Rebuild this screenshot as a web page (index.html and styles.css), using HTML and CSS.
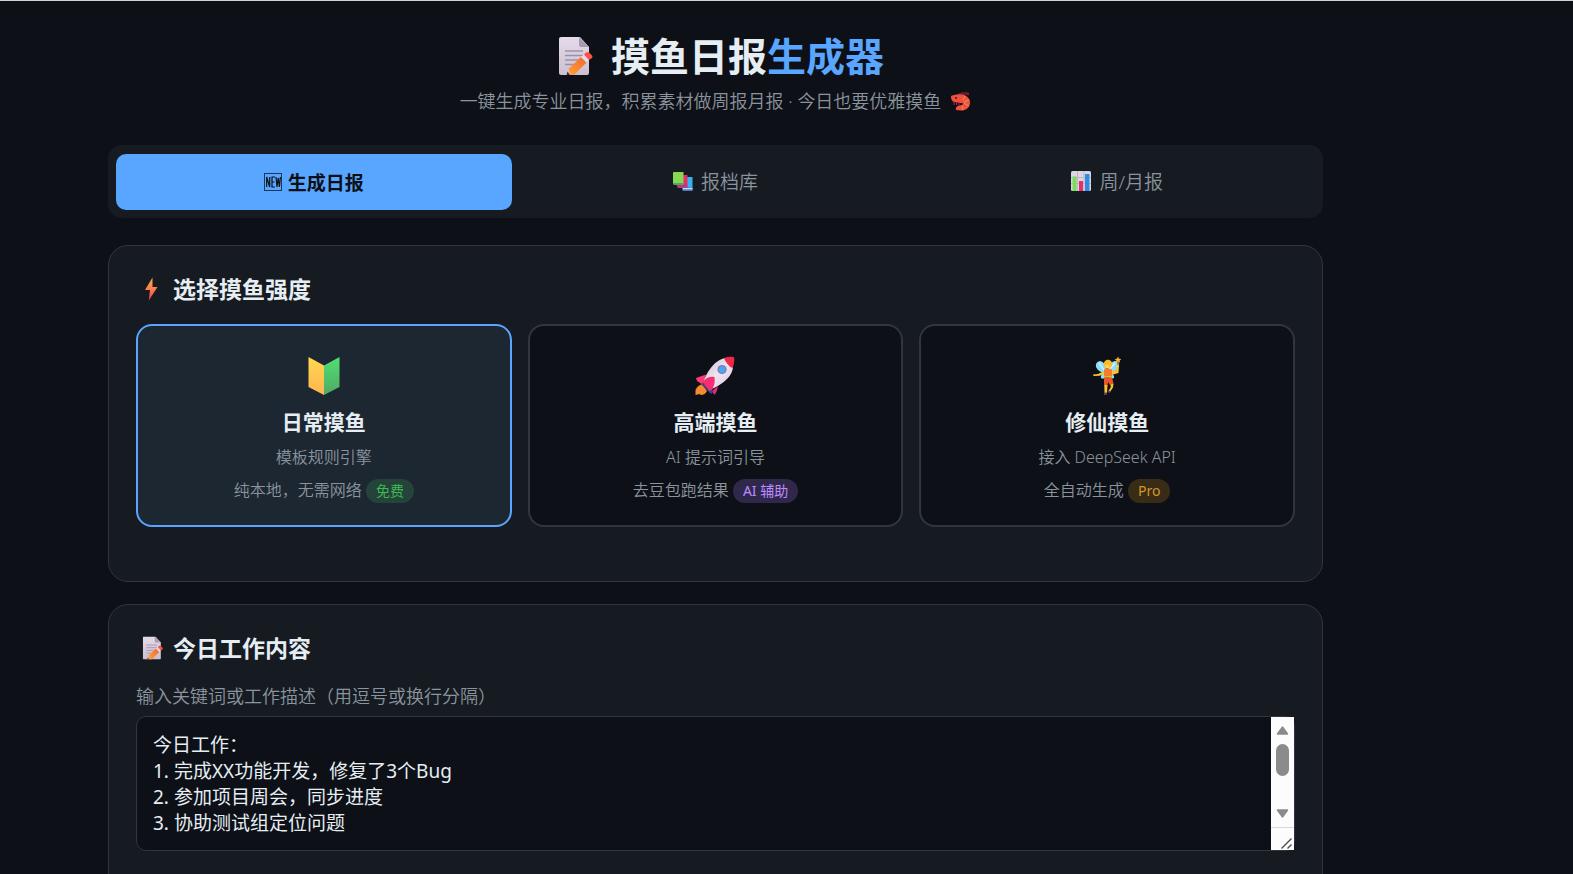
FILE: index.html
```
<!DOCTYPE html>
<html lang="zh-CN">

<head>
    <meta charset="UTF-8">
    <meta name="viewport" content="width=device-width, initial-scale=1.0">
    <title>摸鱼日报生成器</title>
    <link rel="stylesheet" href="styles.css">
</head>

<body>
    <!-- shared icons -->
    <svg class="sprite" aria-hidden="true">
        <defs>
            <linearGradient id="paper" x1="0" y1="0" x2="0" y2="1">
                <stop offset="0" stop-color="#e4dbea" />
                <stop offset="1" stop-color="#cdbfd0" />
            </linearGradient>
            <linearGradient id="pencil" x1="0" y1="1" x2="1" y2="0">
                <stop offset="0" stop-color="#ffa03a" />
                <stop offset="1" stop-color="#f4672f" />
            </linearGradient>
        </defs>
        <symbol id="memo" viewBox="0 0 34 38">
            <path d="M2 0h19l9 10v26a2 2 0 0 1-2 2H2a2 2 0 0 1-2-2V2a2 2 0 0 1 2-2z" fill="url(#paper)" />
            <path d="M20 0l10 10h-8a2 2 0 0 1-2-2z" fill="#a99cb0" />
            <path d="M6 14h18M6 18.500h18M6 23h14M6 27.500h9" stroke="#9c92a6" stroke-width="1.400" />
            <path d="M8 38l2-7 5 5-5 2z" fill="#f0bd8c" />
            <path d="M7.500 38l1-3.500 2.500 3.500z" fill="#4c2450" />
            <path d="M9.500 32L22 20l5.500 5.500L15 38h-3z" fill="url(#pencil)" />
            <path d="M22 20l3-2.500 5 5.500-2.500 2.500z" fill="#e6d9ec" />
            <path d="M25 17.500l2-2q1.500-1.200 3 0l3 3q1 1.500 0 2.500l-3 2z" fill="#fb5244" />
        </symbol>
    </svg>

    <div class="container">
        <header class="header">
            <h1>
                <svg class="icon-memo" viewBox="0 0 34 38" aria-hidden="true"><use href="#memo" /></svg>
                <span>摸鱼日报<em>生成器</em></span>
            </h1>
            <p>
                <span>一键生成专业日报，积累素材做周报月报 · 今日也要优雅摸鱼</span>
                <svg class="icon-shrimp" viewBox="0 0 20 19" aria-hidden="true">
                    <path d="M7 2.500C10 .8 14 .6 18 1.200M9 3.500c3-1.500 6-1.800 9-.8" fill="none" stroke="#9c2735" stroke-width="1" />
                    <path d="M0 4c4-1.500 9-2.500 13-1 4 1.500 6.500 4.500 6 8.500-.6 4.500-4.500 7-8.500 7L5 18c-.6-2 .5-4 3-4.500 2.500-.3 4-.8 4.500-2L3 10C.5 8.800-.2 6.500 0 4z" fill="#f0503f" />
                    <path d="M14 4l-2 4M18 8l-5 2M18 14l-5-3M12 18l-1-4" stroke="#f98a4b" stroke-width="1" />
                    <path d="M3 10v3M5.500 10v3M8 10.500v2.500" stroke="#b92840" stroke-width="1" />
                    <circle cx="5" cy="6" r="1" fill="#4a1626" />
                </svg>
            </p>
        </header>

        <nav class="tabs">
            <button type="button" class="tab active">
                <svg class="icon-new" viewBox="0 0 18 18" aria-hidden="true">
                    <rect x=".5" y=".5" width="17" height="17" fill="none" stroke="#0d1117" stroke-opacity=".75" />
                    <path d="M2.700 14V4l3 10V4M11 4H8v10h3M8 9h2.500M12 4l1 10 1.200-9 1.200 9 1-10" fill="none" stroke="#0d1117" stroke-width="1.200" />
                </svg>
                <span>生成日报</span>
            </button>
            <button type="button" class="tab">
                <svg class="icon-tab" viewBox="0 0 20 20" aria-hidden="true">
                    <path d="M11 6h8.500v13H11q-2 0-2-2z" fill="#35b4ef" />
                    <path d="M9 16.500h10.500V20H11q-2 0-2-2z" fill="#4f78cc" />
                    <path d="M10 17h9.500v1.300H10z" fill="#c5dff4" />
                    <path d="M4 4h10.500v11.500H4z" fill="#e92c64" />
                    <path d="M4 14h10.500v3H5.500L4 16z" fill="#b53b7b" />
                    <path d="M1 1h9.500v12H2q-2 0-2-1.500V2q0-1 1-1z" fill="#86d852" />
                    <path d="M0 12h10.500v2H2q-2 0-2-1z" fill="#49a86b" />
                </svg>
                <span>报档库</span>
            </button>
            <button type="button" class="tab">
                <svg class="icon-tab" viewBox="0 0 20 20" aria-hidden="true">
                    <rect width="20" height="20" rx="1.500" fill="#ded5e4" />
                    <path d="M0 6.500h20M0 12.500h20M6.500 0v20M13 0v20" stroke="#b7acc0" stroke-width=".8" />
                    <path d="M1.500 5.500h4V20h-4z" fill="#7bdc5b" />
                    <path d="M8 10h4v10H8z" fill="#ea2f67" />
                    <path d="M14 3h4.500v17H14z" fill="#2f8de4" />
                </svg>
                <span>周/月报</span>
            </button>
        </nav>

        <section class="card">
            <h2>
                <svg class="icon-title" viewBox="0 0 31 24" aria-hidden="true">
                    <defs>
                        <linearGradient id="bolt" x1="0" y1="0" x2="0" y2="1">
                            <stop offset="0" stop-color="#ffb04a" />
                            <stop offset=".55" stop-color="#fb7a45" />
                            <stop offset="1" stop-color="#e8365e" />
                        </linearGradient>
                    </defs>
                    <path d="M16.500 .5L9 13h5l-1.200 10.500L21.500 10h-5z" fill="url(#bolt)" />
                </svg>
                <span>选择摸鱼强度</span>
            </h2>
            <div class="modes">
                <button type="button" class="mode active">
                    <svg class="mode-icon" viewBox="0 0 40 40" aria-hidden="true">
                        <defs>
                            <linearGradient id="leafL" x1="0" y1="0" x2="0" y2="1">
                                <stop offset="0" stop-color="#ffd84e" />
                                <stop offset="1" stop-color="#ffb452" />
                            </linearGradient>
                            <linearGradient id="leafR" x1="0" y1="0" x2="0" y2="1">
                                <stop offset="0" stop-color="#50e070" />
                                <stop offset="1" stop-color="#4fa967" />
                            </linearGradient>
                        </defs>
                        <path d="M4.500 1L20 9.500V39L4.500 31z" fill="url(#leafL)" />
                        <path d="M35.500 1L20 9.500V39l15.500-8z" fill="url(#leafR)" />
                    </svg>
                    <strong>日常摸鱼</strong>
                    <span class="desc">模板规则引擎</span>
                    <span class="desc">纯本地，无需网络 <i class="badge free">免费</i></span>
                </button>
                <button type="button" class="mode">
                    <svg class="mode-icon" viewBox="0 0 40 40" aria-hidden="true">
                        <defs>
                            <linearGradient id="hull" x1="0" y1="0" x2="1" y2="1">
                                <stop offset="0" stop-color="#c9bcc8" />
                                <stop offset=".5" stop-color="#eee4f2" />
                                <stop offset="1" stop-color="#dcc6e2" />
                            </linearGradient>
                        </defs>
                        <path d="M7 28q-5 2-6.500 6v5l4-1 1.500 1q4 0 6-4z" fill="#f58a2c" />
                        <path d="M11 18.500L1 22l1 3 6 4z" fill="#fa3b74" />
                        <path d="M17 35l2.500 4q3-4 3.500-9z" fill="#e72c78" />
                        <path d="M30 2q-13 3-21 22-1 2 1 4l4 4q2 1 5 0Q37 23 38 11z" fill="url(#hull)" />
                        <path d="M6 28l10 10 3-3L9 26z" fill="#4b3f8c" />
                        <path d="M7.500 26q5-6 12-5 1 8-3 13l-2 1z" fill="#f92d72" />
                        <path d="M29 2q5-2 10-1 1 5-1.500 11-3-1-5-4-2.500-3-3.500-6z" fill="#f12845" />
                        <circle cx="27" cy="13.500" r="4.600" fill="#8277ad" />
                        <circle cx="27" cy="13.500" r="3.200" fill="#47a7f7" />
                    </svg>
                    <strong>高端摸鱼</strong>
                    <span class="desc">AI 提示词引导</span>
                    <span class="desc">去豆包跑结果 <i class="badge ai">AI 辅助</i></span>
                </button>
                <button type="button" class="mode">
                    <svg class="mode-icon" viewBox="0 0 40 40" aria-hidden="true">
                        <path d="M18 17q-7-1-9-6-1-5 4-6 5 1 6 7zM22 17q8-1 10-7 1-5-4-5-5 1-7 7zM18 17q-5 1-4 5 2 2 5-1zM22 17q6 1 5 5-3 2-5-1z" fill="#8fdcfa" />
                        <path d="M17 14L12 7M23 13l5-6" stroke="#d8f6ff" stroke-width="1.200" />
                        <path d="M17 15l-6 3-5 .5.500 1.500 6-.2 5-2zM24 15l5-.5 1-6 2 .5-.5 8-7 2z" fill="#fbc52f" />
                        <path d="M31 9V4" stroke="#7a4a3c" stroke-width="1" />
                        <path d="M31 .5l1 2.200 2.400.2-1.800 1.500.6 2.300L31 5.500l-2.200 1.200.6-2.300-1.800-1.500 2.400-.2z" fill="#ffb42e" />
                        <circle cx="21" cy="8" r="4.200" fill="#fbb827" />
                        <path d="M18.500 9h4v3.500h-4z" fill="#ffd34a" />
                        <path d="M17 13.500q4-2 8 0v8h-8z" fill="#fa7b2b" />
                        <path d="M17 20h8v1.500h-8z" fill="#b8cb37" />
                        <path d="M17 21.500h8l1.500 6-3.500 1.500-2-3-.5 3.500H17z" fill="#ef5329" />
                        <path d="M17.300 29h3.200l-.5 8h-2.500zM23.500 28.500l3-1-.5 4-3 4.500-1.500-1 2.300-4z" fill="#fbc02d" />
                        <path d="M17.300 36.500h2.500V39h-2.800zM21.500 34l2 1.500-.8 1.500-2-1z" fill="#6b3c62" />
                    </svg>
                    <strong>修仙摸鱼</strong>
                    <span class="desc">接入 DeepSeek API</span>
                    <span class="desc">全自动生成 <i class="badge pro">Pro</i></span>
                </button>
            </div>
        </section>

        <section class="card">
            <h2>
                <svg class="icon-title" viewBox="-11 -1 51 40" aria-hidden="true"><use href="#memo" width="34" height="38" /></svg>
                <span>今日工作内容</span>
            </h2>
            <label for="content">输入关键词或工作描述（用逗号或换行分隔）</label>
            <div class="editor">
                <textarea id="content" rows="4">今日工作：
1. 完成XX功能开发，修复了3个Bug
2. 参加项目周会，同步进度
3. 协助测试组定位问题</textarea>
                <svg class="scrollbar" viewBox="0 0 23 133" aria-hidden="true">
                    <path d="M0 0h23v133H0z" fill="#fcfcfc" />
                    <path d="M11.500 10L16.500 17H6.500z M6.500 93h10l-5 7z" fill="#8b8b8b" stroke="#8b8b8b" stroke-width="1.500" stroke-linejoin="round" />
                    <rect x="5" y="27" width="13" height="32" rx="6.500" fill="#8b8b8b" />
                    <path d="M0 110.500h23" stroke="#d9d9d9" />
                    <path d="M10.500 131.500l10-10M16.500 131.500l4-4" stroke="#4a4a4a" stroke-width="1.400" />
                </svg>
            </div>
        </section>
    </div>
</body>

</html>
```
FILE: styles.css
```
* {
    box-sizing: border-box;
    margin: 0;
    padding: 0;
}

body {
    background: #0d1117;
    color: #e6edf3;
    font-family: "Noto Sans", "Noto Sans CJK SC", sans-serif;
    padding: 31px 250px 0 108px;
    border-top: 1px solid #d0d3d6;
}

button,
textarea {
    font-family: inherit;
}

.sprite {
    position: absolute;
    width: 0;
    height: 0;
}

/* header */
.header {
    text-align: center;
    margin-bottom: 30px;
}

.header h1 {
    display: flex;
    justify-content: center;
    align-items: center;
    gap: 18px;
    padding-left: 12px;
    font-size: 39px;
    line-height: 48px;
}

.header em {
    font-style: normal;
    color: #58a6ff;
}

.icon-memo {
    width: 34px;
    height: 38px;
}

.header p {
    display: flex;
    justify-content: center;
    align-items: center;
    gap: 10px;
    margin-top: 8px;
    font-size: 18px;
    font-weight: 350;
    line-height: 27px;
    color: #8b949e;
}

.icon-shrimp {
    width: 20px;
    height: 19px;
}

/* tabs */
.tabs {
    display: flex;
    gap: 6px;
    padding: 9px 8px 8px;
    margin-bottom: 27px;
    background: #161b22;
    border-radius: 14px;
}

.tab {
    display: flex;
    flex: 1;
    justify-content: center;
    align-items: center;
    gap: 8px;
    height: 56px;
    padding-bottom: 3px;
    border: none;
    border-radius: 10px;
    background: transparent;
    color: #8b949e;
    font-size: 19px;
    font-weight: 350;
    cursor: pointer;
}

.tab.active {
    gap: 6px;
    padding-bottom: 0;
    background: #58a6ff;
    color: #0d1117;
    font-weight: 700;
}

.icon-new {
    width: 18px;
    height: 18px;
}

.icon-tab {
    width: 20px;
    height: 20px;
}

/* cards */
.card {
    padding: 27px 27px 54px;
    margin-bottom: 22px;
    background: #161b22;
    border: 1px solid #30363d;
    border-radius: 20px;
}

.card h2 {
    display: flex;
    align-items: center;
    gap: 6px;
    margin-bottom: 19px;
    font-size: 23px;
    line-height: 32px;
}

.icon-title {
    width: 31px;
    height: 24px;
}

.modes {
    display: grid;
    grid-template-columns: repeat(3, 1fr);
    gap: 16px;
}

.mode {
    padding: 30px 16px 18px;
    background: #0d1117;
    border: 2px solid #30363d;
    border-radius: 16px;
    color: #e6edf3;
    text-align: center;
    cursor: pointer;
}

.mode.active {
    background: #1c2732;
    border-color: #58a6ff;
}

.mode-icon {
    display: block;
    width: 40px;
    height: 40px;
    margin: 0 auto 11px;
}

.mode strong {
    display: block;
    margin-bottom: 4px;
    font-size: 21px;
    line-height: 30px;
}

.desc {
    display: block;
    font-size: 16px;
    font-weight: 350;
    line-height: 33px;
    color: #8b949e;
}

.badge {
    display: inline-block;
    padding: 0 10px;
    border-radius: 12px;
    font-size: 14px;
    font-style: normal;
    font-weight: 400;
    line-height: 24px;
}

.free {
    background: #24433a;
    color: #3fb950;
}

.ai {
    background: #30284a;
    color: #bc8cff;
}

.pro {
    background: #392c16;
    color: #d29922;
}

/* form */
label {
    display: block;
    margin-bottom: 7px;
    font-size: 18px;
    font-weight: 350;
    line-height: 26px;
    color: #8b949e;
}

.editor {
    position: relative;
}

.editor textarea {
    display: block;
    width: 100%;
    padding: 15px 40px 14px 16px;
    background: #0d1117;
    border: 1px solid #30363d;
    border-radius: 10px;
    color: #e6edf3;
    font-size: 19px;
    line-height: 26px;
    resize: none;
    outline: none;
}

.scrollbar {
    position: absolute;
    top: 1px;
    right: 1px;
    width: 23px;
    height: 133px;
}
```
